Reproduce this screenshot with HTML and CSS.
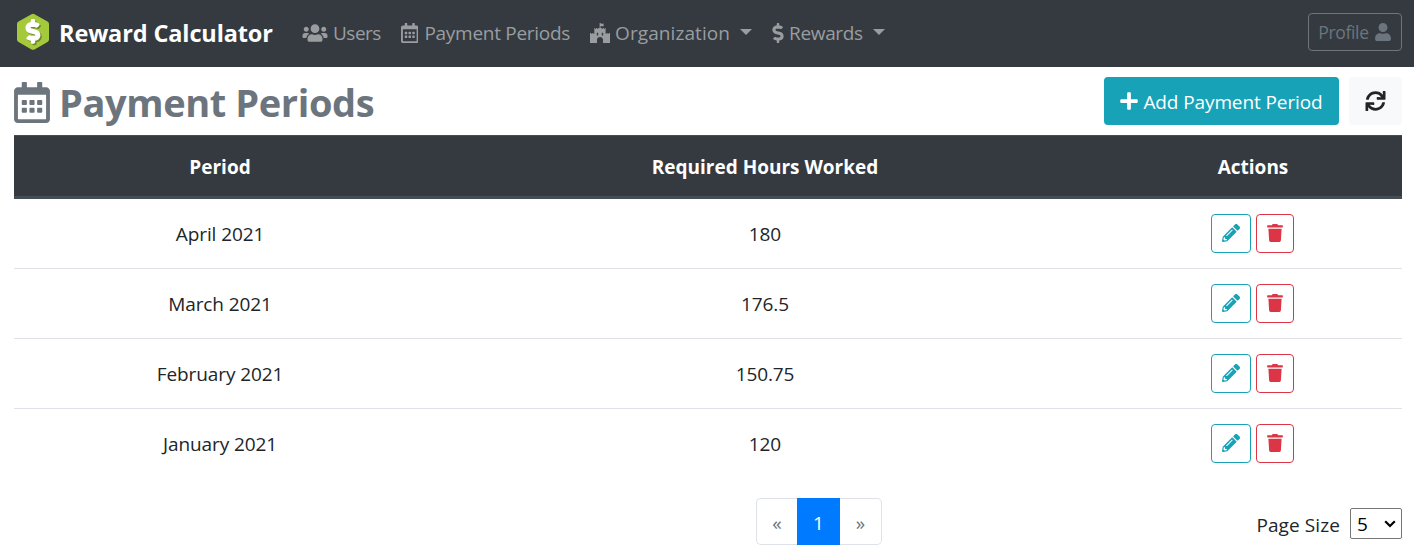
FILE: index.html
```
<!DOCTYPE html>
<html lang="en">
<head>
<meta charset="utf-8">
<title>Reward Calculator</title>
<link rel="stylesheet" href="styles.css">
</head>
<body>
<svg class="sprite" aria-hidden="true">
  <symbol id="calendar" viewBox="0 0 448 512"><path d="M148 288h-40c-6.600 0-12-5.400-12-12v-40c0-6.600 5.400-12 12-12h40c6.600 0 12 5.400 12 12v40c0 6.600-5.400 12-12 12zm108-12v-40c0-6.600-5.400-12-12-12h-40c-6.600 0-12 5.400-12 12v40c0 6.600 5.400 12 12 12h40c6.600 0 12-5.400 12-12zm96 0v-40c0-6.600-5.400-12-12-12h-40c-6.600 0-12 5.400-12 12v40c0 6.600 5.400 12 12 12h40c6.600 0 12-5.400 12-12zm-96 96v-40c0-6.600-5.400-12-12-12h-40c-6.600 0-12 5.400-12 12v40c0 6.600 5.400 12 12 12h40c6.600 0 12-5.400 12-12zm-96 0v-40c0-6.600-5.400-12-12-12h-40c-6.600 0-12 5.400-12 12v40c0 6.600 5.400 12 12 12h40c6.600 0 12-5.400 12-12zm192 0v-40c0-6.600-5.400-12-12-12h-40c-6.600 0-12 5.400-12 12v40c0 6.600 5.400 12 12 12h40c6.600 0 12-5.400 12-12zm96-260v352c0 26.500-21.500 48-48 48H48c-26.500 0-48-21.500-48-48V112c0-26.500 21.500-48 48-48h48V12c0-6.600 5.400-12 12-12h40c6.600 0 12 5.400 12 12v52h128V12c0-6.600 5.400-12 12-12h40c6.600 0 12 5.400 12 12v52h48c26.500 0 48 21.500 48 48zm-48 346V160H48v298c0 3.300 2.700 6 6 6h340c3.300 0 6-2.700 6-6z"/></symbol>
  <symbol id="users" viewBox="0 0 640 512"><path d="M96 224c35.300 0 64-28.700 64-64s-28.700-64-64-64-64 28.700-64 64 28.700 64 64 64zm448 0c35.300 0 64-28.700 64-64s-28.700-64-64-64-64 28.700-64 64 28.700 64 64 64zm32 32h-64c-17.600 0-33.500 7.100-45.100 18.600 40.300 22.100 68.900 62 75.100 109.400h66c17.700 0 32-14.300 32-32v-32c0-35.300-28.700-64-64-64zm-256 0c61.900 0 112-50.100 112-112S381.900 32 320 32 208 82.100 208 144s50.100 112 112 112zm76.800 32h-8.300c-20.800 10-43.900 16-68.500 16s-47.600-6-68.500-16h-8.300C179.600 288 128 339.600 128 403.200V432c0 26.500 21.500 48 48 48h288c26.500 0 48-21.500 48-48v-28.800c0-63.600-51.600-115.200-115.200-115.200zm-223.700-13.400C161.500 263.100 145.600 256 128 256H64c-35.300 0-64 28.700-64 64v32c0 17.700 14.300 32 32 32h65.900c6.300-47.400 34.900-87.300 75.200-109.400z"/></symbol>
  <symbol id="castle" viewBox="0 0 20 20"><path d="M9.600 0h1v.5c1-.4 1.700.5 3 .1v2.600c-1.300.4-2-.5-3-.1v2h1v1h1v-1h1.300v1h.9v-1h.8v6h.8v-1h1.200v1h1v-1H20V20h-7v-3.300c0-3.700-6-3.700-6 0V20H0v-9.900h1.300v1h1v-1h1.200v1h.8v-6h.8v1H6v-1h1.300v1h1v-1h1.300zM6.800 9.700v2.800h1.400V9.700zm5 0v2.800h1.400V9.700z"/></symbol>
  <symbol id="dollar" viewBox="0 0 288 512" overflow="visible"><path d="M209.200 233.400l-108-31.600C88.700 198.200 80 186.500 80 173.500c0-16.300 13.200-29.500 29.500-29.500h66.300c12.200 0 24.200 3.700 34.200 10.500 6.100 4.100 14.300 3.100 19.500-2l34.800-34c7.100-6.900 6.100-18.400-1.800-24.500C238 74.800 207.400 64.100 176 64V16c0-8.800-7.200-16-16-16h-32c-8.800 0-16 7.200-16 16v48h-2.500C45.800 64-5.400 118.700.5 183.600c4.200 46.100 39.400 83.600 83.800 96.600l102.500 30c12.500 3.700 21.200 15.300 21.200 28.300 0 16.300-13.200 29.500-29.500 29.500h-66.300C100 368 88 364.300 78 357.500c-6.100-4.100-14.300-3.100-19.500 2l-34.800 34c-7.100 6.900-6.100 18.400 1.800 24.500 24.500 19.200 55.100 29.900 86.500 30v48c0 8.800 7.200 16 16 16h32c8.800 0 16-7.200 16-16v-48.200c46.600-.9 90.300-28.600 105.700-72.700 21.500-61.600-14.600-124.800-72.500-141.700z"/></symbol>
  <symbol id="user" viewBox="0 0 448 512"><path d="M224 256c70.700 0 128-57.300 128-128S294.700 0 224 0 96 57.300 96 128s57.300 128 128 128zm89.600 32h-16.700c-22.200 10.200-46.900 16-72.900 16s-50.600-5.800-72.900-16h-16.700C60.200 288 0 348.200 0 422.400V464c0 26.500 21.500 48 48 48h352c26.500 0 48-21.500 48-48v-41.600c0-74.200-60.200-134.400-134.400-134.400z"/></symbol>
  <symbol id="plus" viewBox="0 0 448 512"><path d="M416 208H272V64c0-17.670-14.330-32-32-32h-32c-17.670 0-32 14.330-32 32v144H32c-17.670 0-32 14.330-32 32v32c0 17.670 14.330 32 32 32h144v144c0 17.670 14.330 32 32 32h32c17.670 0 32-14.330 32-32V304h144c17.670 0 32-14.330 32-32v-32c0-17.670-14.330-32-32-32z"/></symbol>
  <symbol id="sync" viewBox="0 0 512 512"><path d="M440.650 12.570l4 82.770A247.160 247.160 0 0 0 255.830 8C134.730 8 33.910 94.920 12.290 209.820A12 12 0 0 0 24.090 224h49.050a12 12 0 0 0 11.670-9.260 175.910 175.910 0 0 1 317-56.940l-101.460-4.860a12 12 0 0 0-12.570 12v47.410a12 12 0 0 0 12 12H500a12 12 0 0 0 12-12V12a12 12 0 0 0-12-12h-47.370a12 12 0 0 0-11.980 12.570zM255.830 432a175.610 175.610 0 0 1-146-77.800l101.800 4.870a12 12 0 0 0 12.570-12v-47.400a12 12 0 0 0-12-12H12a12 12 0 0 0-12 12V500a12 12 0 0 0 12 12h47.350a12 12 0 0 0 12-12.600l-4.150-82.570A247.170 247.170 0 0 0 255.830 504c121.110 0 221.930-86.920 243.550-201.820a12 12 0 0 0-11.800-14.180h-49.050a12 12 0 0 0-11.670 9.260A175.860 175.860 0 0 1 255.830 432z"/></symbol>
  <symbol id="trash" viewBox="0 0 448 512"><path d="M432 32H312l-9.400-18.700A24 24 0 0 0 281.100 0H166.800a23.720 23.720 0 0 0-21.400 13.300L136 32H16A16 16 0 0 0 0 48v32a16 16 0 0 0 16 16h416a16 16 0 0 0 16-16V48a16 16 0 0 0-16-16zM36 134l21.200 338a42 42 0 0 0 42 40h249.600a42 42 0 0 0 42-40L412 134z"/></symbol>
  <symbol id="pencil" viewBox="0 0 512 512"><path d="M497.900 142.100l-46.100 46.100c-4.700 4.700-12.300 4.700-17 0l-111-111c-4.700-4.700-4.700-12.300 0-17l46.100-46.100c18.700-18.700 49.100-18.700 67.900 0l60.100 60.100c18.800 18.700 18.800 49.100 0 67.900zM284.200 99.800L21.600 362.400.4 483.900c-2.900 16.400 11.400 30.600 27.800 27.800l121.500-21.300 262.600-262.600c4.700-4.700 4.700-12.300 0-17l-111-111c-4.800-4.700-12.400-4.700-17.100 0zM124.100 339.900c-5.500-5.500-5.500-14.300 0-19.800l154-154c5.500-5.500 14.300-5.500 19.800 0s5.500 14.300 0 19.800l-154 154c-5.500 5.500-14.300 5.500-19.800 0zM88 424h48v36.300l-64.500 11.300-31.100-31.100L51.700 376H88v48z"/></symbol>
</svg>

<nav class="navbar">
  <a class="brand">
    <svg class="logo" viewBox="0 0 34 38">
      <path fill="#a4c93b" d="M15.500 1.200q1.500-.9 3 0l13 7.300q1.500.9 1.500 2.500v15.500q0 1.600-1.500 2.500l-13 7.400q-1.500.9-3 0l-13-7.400Q1 28.100 1 26.500V11q0-1.600 1.500-2.500z"/>
      <g transform="translate(11.600 8.200) scale(.0470 .0455)"><use href="#dollar" class="logo-shadow" width="288" height="512"/></g>
      <g transform="translate(10.200 6.800) scale(.0470 .0455)"><use href="#dollar" class="logo-sign" width="288" height="512"/></g>
    </svg>
    <span class="brand-name">Reward Calculator</span>
  </a>
  <div class="menu">
    <a class="menu-item"><svg class="icon i-users"><use href="#users"/></svg><span class="t-users">Users</span></a>
    <a class="menu-item"><svg class="icon i-cal"><use href="#calendar"/></svg><span class="t-periods">Payment Periods</span></a>
    <a class="menu-item"><svg class="icon i-castle"><use href="#castle"/></svg><span class="t-org">Organization</span><i class="caret"></i></a>
    <a class="menu-item"><svg class="icon i-dollar"><use href="#dollar"/></svg><span class="t-rewards">Rewards</span><i class="caret"></i></a>
  </div>
  <button class="profile"><span>Profile</span><svg class="icon i-user"><use href="#user"/></svg></button>
</nav>

<main class="content">
  <header class="heading">
    <svg class="icon i-title"><use href="#calendar"/></svg>
    <h1 class="title">Payment Periods</h1>
    <button class="add"><svg class="icon i-plus"><use href="#plus"/></svg><span class="add-label">Add Payment Period</span></button>
    <button class="refresh"><svg class="icon i-sync"><use href="#sync"/></svg></button>
  </header>

  <div class="table">
    <div class="row head"><span>Period</span><span>Required Hours Worked</span><span>Actions</span></div>
    <div class="row"><span>April 2021</span><span>180</span><span class="actions"><button class="edit"><svg class="icon i-pencil"><use href="#pencil"/></svg></button><button class="delete"><svg class="icon i-trash"><use href="#trash"/></svg></button></span></div>
    <div class="row"><span>March 2021</span><span>176.5</span><span class="actions"><button class="edit"><svg class="icon i-pencil"><use href="#pencil"/></svg></button><button class="delete"><svg class="icon i-trash"><use href="#trash"/></svg></button></span></div>
    <div class="row"><span>February 2021</span><span>150.75</span><span class="actions"><button class="edit"><svg class="icon i-pencil"><use href="#pencil"/></svg></button><button class="delete"><svg class="icon i-trash"><use href="#trash"/></svg></button></span></div>
    <div class="row"><span>January 2021</span><span>120</span><span class="actions"><button class="edit"><svg class="icon i-pencil"><use href="#pencil"/></svg></button><button class="delete"><svg class="icon i-trash"><use href="#trash"/></svg></button></span></div>
  </div>

  <footer class="footer">
    <div class="pagination"><span class="page prev">«</span><span class="page current">1</span><span class="page next">»</span></div>
    <div class="page-size">
      <span class="size-label">Page Size</span>
      <div class="select"><span>5</span><svg class="chevron" viewBox="0 0 12 8"><path d="M1.200 1.200 6 6l4.800-4.800"/></svg></div>
    </div>
  </footer>
</main>
</body>
</html>
```
FILE: styles.css
```
* { box-sizing: border-box; }
body {
  margin: 0;
  background: #fff;
  color: #212529;
  font: 19px/30px "Open Sans", "Noto Sans", sans-serif;
  letter-spacing: -0.1px;
  white-space: nowrap;
}
button {
  font: inherit;
  letter-spacing: inherit;
  padding: 0;
  display: flex;
  align-items: center;
  justify-content: center;
  border-radius: 4px;
}
.sprite { display: none; }
.icon { display: block; flex: none; fill: currentColor; }

.navbar {
  height: 67px;
  padding: 0 12px 2px 16px;
  display: flex;
  align-items: center;
  background: #343a40;
}
.brand { display: flex; align-items: center; width: 286px; color: #fff; }
.logo { width: 34px; height: 38px; margin: -2px 9px 0 0; }
.logo-shadow { fill: #6f8a2c; stroke: #6f8a2c; stroke-width: 30; }
.logo-sign { fill: #fff; stroke: #fff; stroke-width: 30; }
.brand-name { font-size: 23.5px; font-weight: 700; letter-spacing: -0.13px; }
.menu { display: flex; color: #9a9da0; }
.menu-item { display: flex; align-items: center; margin-right: 20px; }
.i-users { width: 26px; height: 20px; margin-right: 5px; }
.i-cal { width: 17.5px; height: 20px; margin-right: 6px; }
.i-castle { width: 20px; height: 20px; margin-right: 5px; }
.i-dollar { width: 12px; height: 20px; margin-right: 5px; }
.t-users { letter-spacing: -0.5px; }
.t-periods { letter-spacing: -0.28px; }
.t-org { letter-spacing: 0.08px; }
.t-rewards { letter-spacing: -0.35px; }
.caret { border: 6px solid transparent; border-top-color: currentColor; border-bottom: 0; margin: -1px 0 0 10px; }
.profile {
  width: 94px;
  height: 38px;
  margin: -1px 0 0 auto;
  gap: 5px;
  border: 1px solid #6c757d;
  background: transparent;
  color: #6c757d;
  font-size: 17.5px;
  letter-spacing: -0.35px;
}
.i-user { width: 18px; height: 18px; }

.content { padding: 10px 12px 0 14px; }
.heading { height: 58px; display: flex; align-items: flex-start; color: #6c757d; }
.i-title { width: 36px; height: 41px; margin: 5px 9px 0 0; }
.title { margin: 0 auto 0 0; font-size: 38px; line-height: 50px; letter-spacing: -0.4px; }
.add { width: 235px; height: 48px; gap: 5px; border: 0; background: #17a2b8; color: #fff; }
.add-label { padding-top: 1px; }
.i-plus { width: 18px; height: 20px; }
.refresh { width: 53px; height: 48px; margin-left: 10px; border: 0; background: #f8f9fa; color: #212529; }
.i-sync { width: 21px; height: 20px; }

.row {
  height: 70px;
  display: grid;
  grid-template-columns: 412px 678px 298px;
  align-items: center;
  text-align: center;
  border-top: 1px solid #dee2e6;
}
.head {
  height: 64px;
  padding-top: 2px;
  background: #343a40;
  color: #fff;
  font-weight: 700;
  letter-spacing: 0;
  border-top: 1px solid #454d55;
  border-bottom: 3px solid #454d55;
}
.head + .row { height: 69px; border-top: 0; }
.actions { display: flex; justify-content: center; gap: 5px; padding-right: 1px; }
.edit { width: 40px; height: 39px; padding-bottom: 1px; border: 1px solid #17a2b8; background: #fff; color: #17a2b8; }
.delete { width: 38px; height: 39px; padding-bottom: 1px; border: 1px solid #dc3545; background: #fff; color: #dc3545; }
.i-pencil { width: 18px; height: 18px; }
.i-trash { width: 16px; height: 18px; }

.footer { display: grid; grid-template-columns: 742px 1fr auto; padding-top: 20px; }
.pagination { grid-column: 2; display: flex; }
.page { height: 47px; width: 42px; display: flex; align-items: center; justify-content: center; border: 1px solid #dee2e6; color: #6c757d; padding-top: 2px; }
.prev { width: 41px; border-right: 0; border-radius: 5px 0 0 5px; }
.current { width: 43px; border-color: #007bff; background: #007bff; color: #fff; }
.next { border-left: 0; border-radius: 0 5px 5px 0; }
.page-size { display: flex; align-items: center; gap: 10px; height: 31px; margin-top: 10px; }
.size-label { padding-top: 2px; letter-spacing: 0.1px; }
.select { width: 52px; height: 31px; padding: 0 5px 0 6px; display: flex; align-items: center; justify-content: space-between; border: 1px solid #767676; border-radius: 2px; color: #000; }
.chevron { width: 12px; height: 8px; fill: none; stroke: #000; stroke-width: 2.2; }
```
